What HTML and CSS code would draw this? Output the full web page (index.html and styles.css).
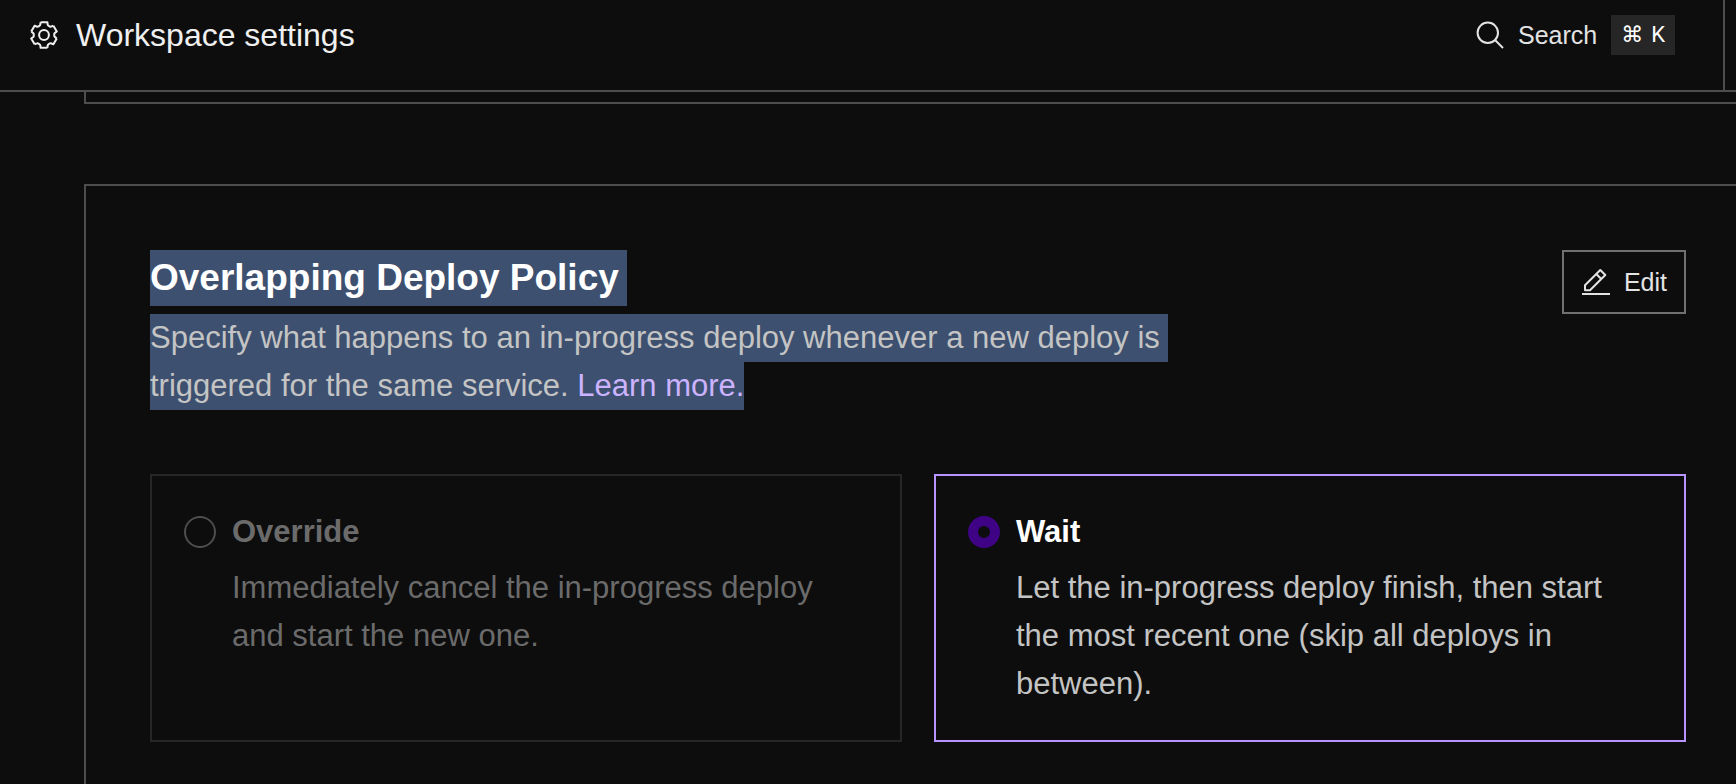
FILE: index.html
```html
<!DOCTYPE html>
<html lang="en">
<head>
<meta charset="utf-8">
<title>Workspace settings</title>
<link rel="stylesheet" href="styles.css">
</head>
<body>
<div class="app">
  <header class="topbar">
    <div class="topbar-main">
      <h1 class="page-title">
        <svg class="icon" viewBox="0 0 28 28" aria-hidden="true">
          <defs><path id="tooth" d="M10.6 1.2H17.4L17.7 3.9Q17.8 4.4 18.4 4.7L20 5.6Q20.4 5.9 21 5.6L23.4 4.7"/></defs>
          <use href="#tooth"/>
          <use href="#tooth" transform="rotate(60 14 14)"/>
          <use href="#tooth" transform="rotate(120 14 14)"/>
          <use href="#tooth" transform="rotate(180 14 14)"/>
          <use href="#tooth" transform="rotate(240 14 14)"/>
          <use href="#tooth" transform="rotate(300 14 14)"/>
          <circle cx="14" cy="14" r="4.9"/>
        </svg>
        Workspace settings
      </h1>
      <button class="search" type="button">
        <svg class="icon" viewBox="0 0 28 28" aria-hidden="true">
          <circle cx="11.8" cy="11.8" r="10.2"/>
          <path d="M19 19L27 27"/>
        </svg>
        <span>Search</span>
        <kbd class="shortcut"><span>⌘</span><span>K</span></kbd>
      </button>
    </div>
    <div class="topbar-end"></div>
  </header>

  <main class="content">
    <section class="card card-previous"></section>

    <section class="card policy">
      <div class="policy-head">
        <div>
          <h2 class="policy-title"><mark class="selected">Overlapping Deploy Policy</mark></h2>
          <p class="policy-text">
            <mark class="selected">Specify what happens to an in-progress deploy whenever a new deploy is</mark>
            <mark class="selected selected-end">triggered for the same service. <a class="link" href="#learn">Learn more.</a></mark>
          </p>
        </div>
        <button class="edit" type="button">
          <svg class="icon" viewBox="0 0 28 28" aria-hidden="true">
            <path d="M3 22.3V17.3L18.3 2L23.3 7L8 22.3Z"/>
            <path d="M14.3 6L19.3 11"/>
            <path d="M0 26H28"/>
          </svg>
          Edit
        </button>
      </div>

      <div class="options">
        <label class="option option-dim">
          <input class="radio" type="radio" name="policy" value="override">
          <span class="option-title">Override</span>
          <span class="option-text">Immediately cancel the in-progress deploy and start the new one.</span>
        </label>
        <label class="option option-active">
          <input class="radio" type="radio" name="policy" value="wait" checked>
          <span class="option-title">Wait</span>
          <span class="option-text">Let the in-progress deploy finish, then start the most recent one (skip all deploys in between).</span>
        </label>
      </div>
    </section>
  </main>
</div>
</body>
</html>
```

FILE: styles.css
```css
* {
  box-sizing: border-box;
}

body {
  margin: 0;
  background: #0d0d0d;
  color: #f0f0f0;
  font-family: "Liberation Sans", Arial, sans-serif;
  font-size: 31px;
  line-height: 48px;
}

h1,
h2,
p {
  margin: 0;
}

button {
  color: inherit;
  background: none;
  border: 0;
  font: inherit;
}

.app {
  display: flex;
  flex-direction: column;
  height: 100vh;
  overflow: hidden;
}

.icon {
  flex: none;
  width: 28px;
  height: 28px;
  fill: none;
  stroke: currentColor;
  stroke-width: 2;
  stroke-linejoin: round;
}

/* Top bar */

.topbar {
  display: flex;
  flex: none;
  border-bottom: 2px solid #4d4d4d;
}

.topbar-main {
  display: flex;
  flex: 1;
  align-items: center;
  justify-content: space-between;
  padding: 11px 48px 31px 30px;
}

.topbar-end {
  width: 13px;
  border-left: 2px solid #4d4d4d;
}

.page-title {
  display: flex;
  align-items: center;
  gap: 18px;
  font-size: 32px;
  font-weight: 400;
}

.search {
  display: flex;
  align-items: center;
  gap: 14px;
  padding: 0;
  color: #e3e3e3;
  font-size: 25px;
  line-height: 40px;
}

.shortcut {
  display: flex;
  gap: 8px;
  padding: 0 10px;
  background: #262626;
  color: #ffffff;
  font-family: Roboto, "DejaVu Sans", sans-serif;
  font-size: 22px;
}

/* Content */

.content {
  display: flex;
  flex: 1;
  flex-direction: column;
  gap: 80px;
  min-height: 0;
  padding-left: 84px;
}

.card {
  flex: none;
  margin-right: -16px;
  border: 2px solid #4d4d4d;
}

.card-previous {
  height: 12px;
  border-top: 0;
}

.policy {
  padding: 64px;
}

.policy-head {
  display: flex;
  align-items: flex-start;
  justify-content: space-between;
  margin-bottom: 64px;
}

.policy-title {
  margin-bottom: 8px;
  color: #ffffff;
  font-size: 37px;
  line-height: 56px;
}

.policy-text {
  color: #c4c4c4;
}

.selected {
  display: block;
  width: fit-content;
  padding-right: 8px;
  background: #3d506f;
  color: inherit;
}

.selected-end {
  padding-right: 0;
}

.link {
  color: #ccb3ff;
  text-decoration: none;
}

.edit {
  display: flex;
  align-items: center;
  gap: 14px;
  height: 64px;
  padding: 0 17px 0 18px;
  border: 2px solid #707070;
  color: #e3e3e3;
  font-size: 25px;
}

/* Options */

.options {
  display: grid;
  grid-template-columns: 1fr 1fr;
  gap: 32px;
}

.option {
  display: grid;
  grid-template-columns: 32px 1fr;
  grid-template-rows: 48px 1fr;
  gap: 8px 16px;
  align-items: start;
  padding: 32px;
  border: 2px solid #262626;
}

.option-active {
  border-color: #b794ff;
}

.radio {
  appearance: none;
  align-self: center;
  width: 32px;
  height: 32px;
  margin: 0;
  border: 2px solid #4d4d4d;
  border-radius: 50%;
}

.radio:checked {
  border: 10px solid #3f0485;
}

.option-title {
  color: #ffffff;
  font-weight: 700;
}

.option-text {
  grid-column: 2;
  color: #c4c4c4;
}

.option-dim .option-title,
.option-dim .option-text {
  color: #6b6b6b;
}
```
